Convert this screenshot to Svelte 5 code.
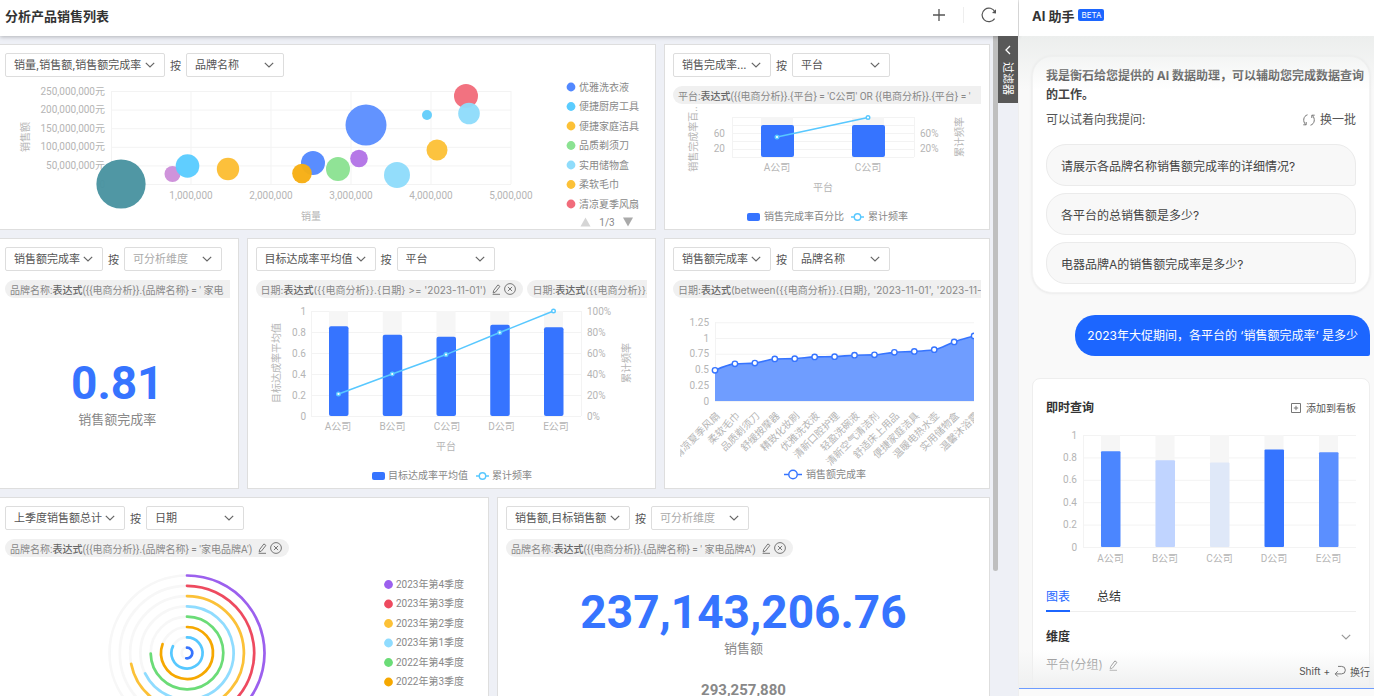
<script>
    const bubbleTicks = ['250,000,000元', '200,000,000元', '150,000,000元', '100,000,000元', '50,000,000元', '0'];
    const salesTicks = ['1,000,000', '2,000,000', '3,000,000', '4,000,000', '5,000,000'];
    const bubbles = [
        { x: 461, y: 19, r: 12, color: '#f16c7b' },
        { x: 464, y: 36.5, r: 10.8, color: '#8fdcfb' },
        { x: 361, y: 48, r: 20.5, color: '#5c8fff' },
        { x: 422, y: 38, r: 5, color: '#62cdfb' },
        { x: 432, y: 73, r: 10.5, color: '#fcc137' },
        { x: 392, y: 98, r: 13, color: '#8fdcfb' },
        { x: 354, y: 81.5, r: 8.8, color: '#b272e6' },
        { x: 333, y: 92, r: 12, color: '#8be292' },
        { x: 308, y: 86, r: 12, color: '#5288ff' },
        { x: 297, y: 96.5, r: 9.8, color: '#f7ae12' },
        { x: 223, y: 92, r: 11.2, color: '#fcbd33' },
        { x: 167.5, y: 97, r: 8, color: '#cd8fda' },
        { x: 182.5, y: 89, r: 11.8, color: '#5accff' },
        { x: 116, y: 107, r: 24.6, color: '#4993a0' }
    ];
    const products = [
        { name: '优雅洗衣液', color: '#5288ff' },
        { name: '便捷厨房工具', color: '#5accff' },
        { name: '便捷家庭洁具', color: '#fcc137' },
        { name: '品质剃须刀', color: '#8be292' },
        { name: '实用储物盒', color: '#8fdcfb' },
        { name: '柔软毛巾', color: '#fcc137' },
        { name: '清凉夏季风扇', color: '#f16c7b' }
    ];

    const companies = [
        { name: 'A公司', value: 0.855, total: 0.21, tint: '#4b86ff' },
        { name: 'B公司', value: 0.775, total: 0.4, tint: '#c0d4ff' },
        { name: 'C公司', value: 0.755, total: 0.585, tint: '#dfe8f8' },
        { name: 'D公司', value: 0.87, total: 0.795, tint: '#3574ff' },
        { name: 'E公司', value: 0.845, total: 1, tint: '#5b8fff' }
    ];
    const steps = [0, 0.2, 0.4, 0.6, 0.8, 1];

    const rates = [
        { name: '清凉夏季风扇', value: 0.485 },
        { name: '柔软毛巾', value: 0.588 },
        { name: '品质剃须刀', value: 0.6 },
        { name: '舒缓按摩器', value: 0.665 },
        { name: '精致化妆刷', value: 0.67 },
        { name: '优雅洗衣液', value: 0.698 },
        { name: '清新口腔护理', value: 0.702 },
        { name: '轻盈洗碗液', value: 0.725 },
        { name: '清新空气清洁剂', value: 0.73 },
        { name: '舒适床上用品', value: 0.77 },
        { name: '便捷家庭洁具', value: 0.785 },
        { name: '温暖电热水壶', value: 0.812 },
        { name: '实用储物盒', value: 0.935 },
        { name: '温馨沐浴露', value: 1.03 }
    ];
    const points = rates.map((r, i) => ({ x: 42 + i * 19.93, y: 103 - (r.value / 1.25) * 79 }));

    // monotone curve: the tangent is the harmonic mean of both slopes
    function curve(pts) {
        const slope = pts.slice(1).map((p, i) => (p.y - pts[i].y) / (p.x - pts[i].x));
        const tangent = pts.map((p, i) => {
            if (i === 0) return slope[0] * 1.4;
            if (i === pts.length - 1) return slope[i - 1];
            return (2 * slope[i - 1] * slope[i]) / (slope[i - 1] + slope[i]);
        });
        let d = `M${pts[0].x} ${pts[0].y}`;
        for (let i = 1; i < pts.length; i++) {
            const a = pts[i - 1];
            const b = pts[i];
            const h = (b.x - a.x) / 3;
            d += ` C${a.x + h} ${a.y + tangent[i - 1] * h} ${b.x - h} ${b.y - tangent[i] * h} ${b.x} ${b.y}`;
        }
        return d;
    }
    const ratePath = curve(points);

    const rings = [
        { r: 77.5, angle: 205, color: '#9c60ee' },
        { r: 67.2, angle: 214, color: '#ee4a5f' },
        { r: 56.9, angle: 259, color: '#fcc137' },
        { r: 46.6, angle: 244, color: '#8fdcff' },
        { r: 36.3, angle: 269, color: '#6bdc77' },
        { r: 26, angle: 290, color: '#f6a800' },
        { r: 15.6, angle: 296, color: '#56c8ff' },
        { r: 5.3, angle: 188, color: '#3674ff' }
    ];
    const quarters = ['2023年第4季度', '2023年第3季度', '2023年第2季度', '2023年第1季度', '2022年第4季度', '2022年第3季度'];

    function arc(r, angle) {
        const a = (angle * Math.PI) / 180;
        return `M182 96 m0 ${-r} A${r} ${r} 0 ${angle > 180 ? 1 : 0} 1 ${182 + r * Math.sin(a)} ${96 - r * Math.cos(a)}`;
    }

    const questions = ['请展示各品牌名称销售额完成率的详细情况?', '各平台的总销售额是多少?', '电器品牌A的销售额完成率是多少?'];
</script>

{#snippet chevron()}
    <svg class="chevron" width="10" height="6" viewBox="0 0 10 6" aria-hidden="true">
        <path d="M0.8 0.8 L5 5 L9.2 0.8" />
    </svg>
{/snippet}

{#snippet pencil()}
    <svg class="icon" width="9" height="11" viewBox="0 0 9 11" aria-hidden="true">
        <path d="M1.2 9 L1.6 6.6 L5.9 0.9 L7.9 2.4 L3.5 8 Z M0.6 10.3 H8" />
    </svg>
{/snippet}

{#snippet picker(measure, dimension, muted)}
    <div class="picker">
        <span class="drop">
            <select aria-label="指标"><option>{measure}</option></select>
            {@render chevron()}
        </span>
        <span>按</span>
        <span class="drop">
            <select aria-label="维度" class:muted><option>{dimension}</option></select>
            {@render chevron()}
        </span>
    </div>
{/snippet}

<!-- open: the expression runs on past the edge of the card -->
{#snippet chip(field, expression, open)}
    <div class="chip" class:open class:date={field === '日期'}>
        <span>{field}:<b>表达式</b>{expression}</span>
        {#if !open}
            <button class="plain" aria-label="编辑">{@render pencil()}</button>
            <button class="plain" aria-label="删除">
                <svg class="icon" width="12" height="12" viewBox="0 0 12 12" aria-hidden="true">
                    <circle cx="6" cy="6" r="5.4" />
                    <path d="M3.9 3.9 L8.1 8.1 M8.1 3.9 L3.9 8.1" />
                </svg>
            </button>
        {/if}
    </div>
{/snippet}

{#snippet lineMark(x, y)}
    <path d="M{x} {y} h13" class="line" />
    <circle cx={x + 6.5} cy={y} r="3.2" class="dot" />
{/snippet}

<div class="page">
    <main>
        <header>
            <h1>分析产品销售列表</h1>
            <button class="plain" aria-label="添加">
                <svg width="14" height="14" viewBox="0 0 14 14"><path d="M7 1 V13 M1 7 H13" stroke="#555" stroke-width="1.3" /></svg>
            </button>
            <i></i>
            <button class="plain" aria-label="刷新">
                <svg width="16" height="16" viewBox="0 0 16 16">
                    <path d="M13.6 11.6 A6.8 6.8 0 1 1 14 4.9" fill="none" stroke="#555" stroke-width="1.2" />
                    <path d="M15 2.2 V6.4 L11 5.9 Z" fill="#555" />
                </svg>
            </button>
        </header>

        <div class="body">
            <div class="board">
                <section class="card w8">
                    {@render picker('销量,销售额,销售额完成率', '品牌名称', false)}
                    <svg class="chart" height="152" viewBox="0 0 640 152" preserveAspectRatio="xMinYMid meet">
                        {#each bubbleTicks as t, i}
                            <path class="grid" d="M106 {14.5 + i * 18.6} H506" />
                            <text x="100" y={14 + i * 18.6} text-anchor="end">{t}</text>
                        {/each}
                        <path class="grid" d="M106.5 14 V107" />
                        {#each salesTicks as m, i}
                            <path class="grid" d="M{186 + i * 80} 14 V107" />
                            <text x={186 + i * 80} y="118" text-anchor="middle">{m}</text>
                        {/each}
                        <text x="306" y="139" text-anchor="middle">销量</text>
                        <text transform="translate(20 60) rotate(-90)" text-anchor="middle">销售额</text>
                        {#each bubbles as b}
                            <circle cx={b.x} cy={b.y} r={b.r} fill={b.color} fill-opacity="0.96" />
                        {/each}
                        {#each products as p, i}
                            <circle cx="566" cy={10 + i * 19.5} r="4.4" fill={p.color} />
                            <text class="legend" x="574" y={10 + i * 19.5}>{p.name}</text>
                        {/each}
                        <path d="M575.5 149.5 L580.5 140.5 L585.5 149.5 Z" fill="#d5d5d5" />
                        <text class="legend" x="602" y="145" text-anchor="middle">1/3</text>
                        <path d="M618 140.5 H628 L623 149.5 Z" fill="#aaa" />
                    </svg>
                </section>

                <section class="card w4">
                    {@render picker('销售完成率...', '平台', false)}
                    <div class="chips">
                        {@render chip('平台', "({{电商分析}}.{平台} = 'C公司' OR {{电商分析}}.{平台} = '", true)}
                    </div>
                    <svg class="chart" height="125" viewBox="0 0 306 125" preserveAspectRatio="xMinYMid meet">
                        {#each [13, 21, 29, 37, 45, 53] as y}
                            <path class="grid" d="M59 {y}.5 H241" />
                        {/each}
                        <path class="grid" d="M59.5 13 V53 M241.5 13 V53" />
                        <text x="52" y="29" text-anchor="end">60</text>
                        <text x="52" y="44" text-anchor="end">20</text>
                        <text x="247" y="29">60%</text>
                        <text x="247" y="44">20%</text>
                        {#each ['A公司', 'C公司'] as name, i}
                            <rect x={88 + i * 91} y="13" width="32" height="40" fill="#f5f5f5" />
                            <rect x={88 + i * 91} y="21" width="33" height="32" rx="2" fill="#3674ff" />
                            <text x={104 + i * 91} y="63" text-anchor="middle">{name}</text>
                        {/each}
                        <path class="line" d="M104 33 L195 13.5" />
                        <circle class="dot" cx="104" cy="33" r="1.8" />
                        <circle class="dot" cx="195" cy="13.5" r="1.8" />
                        <text x="150" y="83" text-anchor="middle">平台</text>
                        <text transform="translate(20 35) rotate(-90)" text-anchor="middle">销售完成率百..</text>
                        <text transform="translate(286 33) rotate(-90)" text-anchor="middle">累计频率</text>
                        <rect x="74" y="109" width="13" height="8" rx="2" fill="#3674ff" />
                        <text class="legend" x="91" y="112">销售完成率百分比</text>
                        {@render lineMark(178, 113)}
                        <text class="legend" x="195" y="112">累计频率</text>
                    </svg>
                </section>

                <section class="card w3">
                    {@render picker('销售额完成率', '可分析维度', true)}
                    <div class="chips">
                        {@render chip('品牌名称', "({{电商分析}}.{品牌名称} = ' 家电", true)}
                    </div>
                    <div class="kpi single">
                        <strong>0.81</strong>
                        <span>销售额完成率</span>
                    </div>
                </section>

                <section class="card w5">
                    {@render picker('目标达成率平均值', '平台', false)}
                    <div class="chips">
                        {@render chip('日期', "({{电商分析}}.{日期} >= '2023-11-01')", false)}
                        {@render chip('日期', "({{电商分析}}.{日", true)}
                    </div>
                    <svg class="chart" height="190" viewBox="0 0 390 190" preserveAspectRatio="xMinYMid meet">
                        {#each steps as s}
                            <path class="grid" d="M55 {118.5 - s * 105} H325" />
                            <text x="50" y={118 - s * 105} text-anchor="end">{s}</text>
                            <text x="331" y={118 - s * 105}>{Math.round(s * 100)}%</text>
                        {/each}
                        <path class="grid" d="M55.5 13 V118 M325.5 13 V118" />
                        {#each companies as c, i}
                            <rect x={73 + i * 53.75} y="13" width="19" height="104" fill="#f6f6f6" />
                            <rect x={73 + i * 53.75} y={118 - c.value * 105} width="19.5" height={c.value * 105} rx="2" fill="#3674ff" />
                            <text x={82 + i * 54.5} y="128" text-anchor="middle">{c.name}</text>
                        {/each}
                        <polyline class="line" points={companies.map((c, i) => `${82.5 + i * 53.75},${118 - c.total * 105}`).join(' ')} />
                        {#each companies as c, i}
                            <circle class="dot" cx={82.5 + i * 53.75} cy={118 - c.total * 105} r="1.8" />
                        {/each}
                        <text x="190" y="148" text-anchor="middle">平台</text>
                        <text transform="translate(20 65) rotate(-90)" text-anchor="middle">目标达成率平均值</text>
                        <text transform="translate(370 65) rotate(-90)" text-anchor="middle">累计频率</text>
                        <rect x="116" y="174" width="13" height="8" rx="2" fill="#3674ff" />
                        <text class="legend" x="132" y="177">目标达成率平均值</text>
                        {@render lineMark(220, 178)}
                        <text class="legend" x="236" y="177">累计频率</text>
                    </svg>
                </section>

                <section class="card w4">
                    {@render picker('销售额完成率', '品牌名称', false)}
                    <div class="chips">
                        {@render chip('日期', "(between({{电商分析}}.{日期}, '2023-11-01', '2023-11-", true)}
                    </div>
                    <svg class="chart" height="190" viewBox="0 0 306 190" preserveAspectRatio="xMinYMid meet">
                        <clipPath id="plot"><rect x="7" y="0" width="294" height="190" /></clipPath>
                        {#each [0, 0.25, 0.5, 0.75, 1, 1.25] as v}
                            <path class="grid" d="M42 {103.5 - v * 63} H301" />
                            <text x="36" y={103 - v * 63} text-anchor="end">{v}</text>
                        {/each}
                        <path class="grid" d="M42.5 24 V103" />
                        <g clip-path="url(#plot)">
                            <path d="{ratePath} V103 H42 Z" fill="#6f9dff" />
                            <path d={ratePath} fill="none" stroke="#3674ff" stroke-width="1.6" />
                            {#each points as p, i}
                                <circle class="mark" cx={p.x} cy={p.y} r="2.7" />
                                <text transform="translate({p.x + 3} 116) rotate(-45)" text-anchor="end">{rates[i].name}</text>
                            {/each}
                        </g>
                        <path d="M111 176.5 h18" stroke="#3674ff" stroke-width="1.5" />
                        <circle class="mark" cx="120" cy="176.5" r="4.2" />
                        <text class="legend" x="133" y="176">销售额完成率</text>
                    </svg>
                </section>

                <section class="card w6">
                    {@render picker('上季度销售额总计', '日期', false)}
                    <div class="chips">
                        {@render chip('品牌名称', "({{电商分析}}.{品牌名称} = '家电品牌A')", false)}
                    </div>
                    <svg class="chart" height="190" viewBox="0 0 470 190" preserveAspectRatio="xMinYMid meet">
                        {#each rings as ring}
                            <circle cx="182" cy="96" r={ring.r} fill="none" stroke="#f7f7f7" stroke-width="2.7" />
                            <path d={arc(ring.r, ring.angle)} fill="none" stroke={ring.color} stroke-width="2.7" stroke-linecap="round" />
                        {/each}
                        {#each quarters as q, i}
                            <circle cx="383.5" cy={27.5 + i * 19.5} r="4.4" fill={rings[i].color} />
                            <text class="legend" x="391" y={27 + i * 19.5}>{q}</text>
                        {/each}
                    </svg>
                </section>

                <section class="card w6">
                    {@render picker('销售额,目标销售额', '可分析维度', true)}
                    <div class="chips">
                        {@render chip('品牌名称', "({{电商分析}}.{品牌名称} = ' 家电品牌A')", false)}
                    </div>
                    <div class="kpi">
                        <strong>237,143,206.76</strong>
                        <span>销售额</span>
                        <b>293,257,880</b>
                    </div>
                </section>
            </div>
            <div class="scrollbar"><div></div></div>
            <button class="filter">
                <svg width="8" height="10" viewBox="0 0 8 10" aria-hidden="true"><path d="M6 1 L2 5 L6 9" fill="none" stroke="#fff" stroke-width="1.3" /></svg>
                <span>过滤器</span>
            </button>
        </div>
    </main>

    <aside>
        <header>
            <h2>AI 助手</h2>
            <span class="beta">BETA</span>
        </header>
        <div class="chat">
            <section class="intro">
                <p class="hello">我是衡石给您提供的 AI 数据助理，可以辅助您完成数据查询<br />的工作。</p>
                <div class="ask">
                    <span>可以试着向我提问:</span>
                    <button class="plain">
                        <svg class="icon" width="14" height="12" viewBox="0 0 14 12" aria-hidden="true">
                            <path d="M5.5 0.8 C1.2 2 0.6 7.5 3.6 10.6 M1.3 10.8 H4.2 V8" />
                            <path d="M8.5 11.2 C12.8 10 13.4 4.5 10.4 1.4 M12.7 1.2 H9.8 V4" />
                        </svg>
                        换一批
                    </button>
                </div>
                {#each questions as q}
                    <button class="question">{q}</button>
                {/each}
            </section>

            <p class="sent">2023年大促期间，各平台的 ‘销售额完成率’ 是多少</p>

            <section class="answer">
                <div class="title">
                    <h3>即时查询</h3>
                    <button class="plain">
                        <svg class="icon" width="10" height="10" viewBox="0 0 10 10" aria-hidden="true">
                            <path d="M0.5 0.5 H9.5 V9.5 H0.5 Z M5 2.8 V7.2 M2.8 5 H7.2" />
                        </svg>
                        添加到看板
                    </button>
                </div>
                <svg class="chart" height="144" viewBox="0 0 310 144" preserveAspectRatio="xMinYMid meet">
                    {#each steps as s}
                        <path class="grid" d="M37 {124.5 - s * 112} H310" />
                        <text x="31" y={124 - s * 112} text-anchor="end">{s}</text>
                    {/each}
                    <path class="grid" d="M37.5 12 V124" />
                    {#each companies as c, i}
                        <rect x={55 + i * 54.5} y="12" width="19" height="112" fill="#f6f6f6" />
                        <rect x={55 + i * 54.5} y={124 - c.value * 112} width="19.5" height={c.value * 112} rx="1" fill={c.tint} />
                        <text x={64.5 + i * 54.5} y="135" text-anchor="middle">{c.name}</text>
                    {/each}
                </svg>
                <div class="tabs">
                    <button class="plain active">图表</button>
                    <button class="plain">总结</button>
                </div>
                <div class="group">
                    <h3>维度</h3>
                    {@render chevron()}
                </div>
                <div class="field">平台(分组) {@render pencil()}</div>
            </section>
        </div>
        <div class="composer">
            <div class="hint">
                Shift +
                <svg class="icon" width="12" height="12" viewBox="0 0 12 12" aria-hidden="true">
                    <path d="M4 1.4 H7.6 A3.7 3.7 0 0 1 7.6 8.9 H1.2 M3.8 6.3 L1.2 8.9 L3.8 11.5" />
                </svg>
                换行
            </div>
            <textarea aria-label="输入问题"></textarea>
        </div>
    </aside>
</div>

<style>
    :global(body) {
        margin: 0;
        font-family: Inter, "Noto Sans CJK SC", sans-serif;
        font-size: 12px;
        color: #555;
    }

    .page {
        display: flex;
        height: 100vh;
        overflow: hidden;
    }

    main {
        flex: 1;
        min-width: 0;
        display: flex;
        flex-direction: column;
    }

    header {
        position: relative;
        z-index: 2;
        display: flex;
        align-items: center;
        height: 36px;
        box-sizing: border-box;
        padding: 0 21px 6px 5px;
        background: #fff;
    }

    main header {
        gap: 17px;
        box-shadow: 0 1px 4px rgba(0, 0, 0, 0.25);
    }

    main header i {
        width: 1px;
        height: 16px;
        background: #eee;
    }

    h1, h2, h3 {
        margin: 0;
        font-size: 13px;
        font-weight: 700;
        color: #333;
    }

    h1 {
        flex: 1;
    }

    h3 {
        flex: 1;
        font-size: 12px;
    }

    button, select, textarea {
        font: inherit;
        color: inherit;
    }

    .plain {
        display: flex;
        align-items: center;
        border: 0;
        padding: 0;
        background: none;
    }

    .body {
        flex: 1;
        min-height: 0;
        display: flex;
        background: #eef0f6;
    }

    .board {
        flex: 1;
        min-width: 0;
        margin-left: -4px;
        padding-top: 8px;
        display: grid;
        grid-template-columns: repeat(12, minmax(0, 1fr));
        align-content: start;
        gap: 8px;
        overflow: hidden;
    }

    .card {
        box-sizing: border-box;
        padding: 8px 8px 0;
        border: 1px solid #dedede;
        background: #fff;
    }

    .w3 { grid-column: span 3; }
    .w4 { grid-column: span 4; }
    .w5 { grid-column: span 5; }
    .w6 { grid-column: span 6; }
    .w8 { grid-column: span 8; }

    .picker {
        display: flex;
        align-items: center;
        gap: 5px;
        font-size: 11px;
    }

    .drop {
        position: relative;
        display: flex;
    }

    .drop select {
        appearance: none;
        box-sizing: border-box;
        min-width: 98px;
        height: 24px;
        padding: 0 22px 0 8px;
        border: 1px solid #ddd;
        border-radius: 2px;
        background: #fff;
    }

    .drop select.muted {
        color: #aaa;
    }

    .drop .chevron {
        position: absolute;
        top: 9px;
        right: 10px;
        pointer-events: none;
    }

    .chevron {
        fill: none;
        stroke: #666;
        stroke-width: 1.2;
    }

    .chips {
        display: flex;
        gap: 4px;
        margin-top: 9px;
        overflow: hidden;
    }

    .chip {
        flex: none;
        display: flex;
        align-items: center;
        gap: 3px;
        height: 18px;
        padding: 0 7px 0 5px;
        border-radius: 9px;
        background: #f0f0f0;
        color: #888;
        font-family: Roboto, "Noto Sans CJK SC", sans-serif;
        font-size: 10px;
        white-space: nowrap;
    }

    .chip.date {
        font-family: Inter, "Noto Sans CJK SC", sans-serif;
    }

    .chip.open {
        flex: 1;
        min-width: 0;
        padding-right: 0;
        border-radius: 9px 0 0 9px;
        overflow: hidden;
    }

    .chip span {
        margin-right: 3px;
    }

    .chip.open span {
        margin-right: 0;
    }

    .chip b {
        font-weight: 500;
        color: #666;
    }

    .icon {
        fill: none;
        stroke: #777;
        stroke-width: 1;
    }

    .chart {
        display: block;
        width: 100%;
        overflow: hidden;
    }

    .chart text {
        font-family: Roboto, "Noto Sans CJK SC", sans-serif;
        font-size: 10px;
        fill: #b5b5b5;
        dominant-baseline: central;
    }

    .chart .legend {
        fill: #888;
    }

    .grid {
        fill: none;
        stroke: #f3f3f3;
    }

    .line {
        fill: none;
        stroke: #58c8ff;
        stroke-width: 1.5;
    }

    .dot {
        fill: #fff;
        stroke: #58c8ff;
        stroke-width: 1.4;
    }

    .mark {
        fill: #fff;
        stroke: #3674ff;
        stroke-width: 1.4;
    }

    .kpi {
        display: flex;
        flex-direction: column;
        align-items: center;
        padding-top: 28px;
        font-family: Roboto, "Noto Sans CJK SC", sans-serif;
        color: #888;
    }

    .kpi.single {
        padding-top: 58px;
    }

    .kpi strong {
        font-size: 46px;
        line-height: 54px;
        color: #3674ff;
    }

    .kpi span {
        font-size: 13px;
        line-height: 20px;
    }

    .kpi b {
        margin-top: 21px;
        font-size: 15px;
        line-height: 20px;
    }

    .scrollbar {
        width: 5px;
        margin-left: 3px;
    }

    .scrollbar div {
        height: 81%;
        border-radius: 0 0 3px 3px;
        background: #bfbfbf;
    }

    .filter {
        z-index: 3;
        display: flex;
        flex-direction: column;
        align-items: center;
        gap: 7px;
        align-self: flex-start;
        width: 20px;
        height: 67px;
        padding: 9px 0 0;
        border: 0;
        background: #585858;
        color: #fff;
        font-size: 11px;
        line-height: 20px;
    }

    .filter span {
        writing-mode: vertical-rl;
        text-orientation: sideways;
    }

    aside {
        position: relative;
        width: 355px;
        border-left: 1px solid #eee;
        background: #f9f9f9;
    }

    aside header {
        gap: 4px;
        padding-left: 13px;
    }

    .beta {
        padding: 0 3px;
        border-radius: 2px;
        background: #1c66ff;
        color: #fff;
        font-size: 8px;
        line-height: 12px;
    }

    .chat {
        position: relative;
        padding: 20px 4px 0 13px;
    }

    .chat::before {
        content: "";
        position: absolute;
        z-index: 1;
        top: 0;
        left: 0;
        right: 0;
        height: 54px;
        background: linear-gradient(#eceeed, rgba(249, 249, 249, 0));
        pointer-events: none;
    }

    .intro {
        padding: 9px 13px 8px;
        border: 1px solid #f3f3f3;
        border-radius: 20px;
        background: #fff;
        box-shadow: 0 0 3px rgba(0, 0, 0, 0.1);
    }

    p {
        margin: 0;
    }

    .hello {
        font-weight: 700;
        line-height: 19px;
        color: #444;
        white-space: nowrap;
    }

    .ask {
        display: flex;
        justify-content: space-between;
        margin: 7px 0 15px;
        line-height: 18px;
    }

    .ask .plain {
        gap: 4px;
    }

    .question {
        display: block;
        width: 100%;
        height: 42px;
        margin-top: 7px;
        padding: 0 14px;
        border: 1px solid #ebebeb;
        border-radius: 20px 20px 3px 20px;
        background: #f8f8f8;
        color: #444;
        text-align: left;
    }

    .sent {
        width: fit-content;
        margin: 22px 0 22px auto;
        padding: 0 12px;
        border-radius: 20px 20px 2px 20px;
        background: #1c66ff;
        color: #fff;
        line-height: 41px;
        white-space: nowrap;
    }

    .answer {
        height: 400px;
        padding: 20px 13px 0;
        border: 1px solid #eee;
        border-radius: 8px;
        box-sizing: border-box;
        background: #fff;
    }

    .title, .group {
        display: flex;
        align-items: center;
        line-height: 18px;
    }

    .title {
        margin-bottom: 6px;
    }

    .title .plain {
        gap: 5px;
        font-size: 10px;
    }

    .tabs {
        display: flex;
        gap: 27px;
        height: 44px;
        border-bottom: 1px solid #eee;
    }

    .tabs .plain {
        height: 45px;
        padding-top: 14px;
        box-sizing: border-box;
        border-bottom: 2px solid transparent;
        color: #333;
    }

    .tabs .active {
        border-color: #1c66ff;
        color: #1c66ff;
    }

    .group {
        margin: 16px 5px 10px 0;
    }

    .group .chevron {
        stroke: #999;
    }

    .field {
        display: flex;
        align-items: center;
        gap: 6px;
        line-height: 18px;
        color: #888;
    }

    .composer {
        position: absolute;
        z-index: 2;
        left: 0;
        right: 0;
        bottom: 0;
    }

    .hint {
        display: flex;
        align-items: center;
        justify-content: flex-end;
        gap: 4px;
        height: 38px;
        padding: 4px 4px 0;
        box-sizing: border-box;
        background: linear-gradient(rgba(240, 240, 240, 0), #eff0f0);
        font-size: 10px;
    }

    textarea {
        display: block;
        width: 100%;
        height: 8px;
        box-sizing: border-box;
        border: 0;
        border-top: 1px solid #6d9cff;
        padding: 0;
        background: #fafafa;
        resize: none;
    }
</style>
